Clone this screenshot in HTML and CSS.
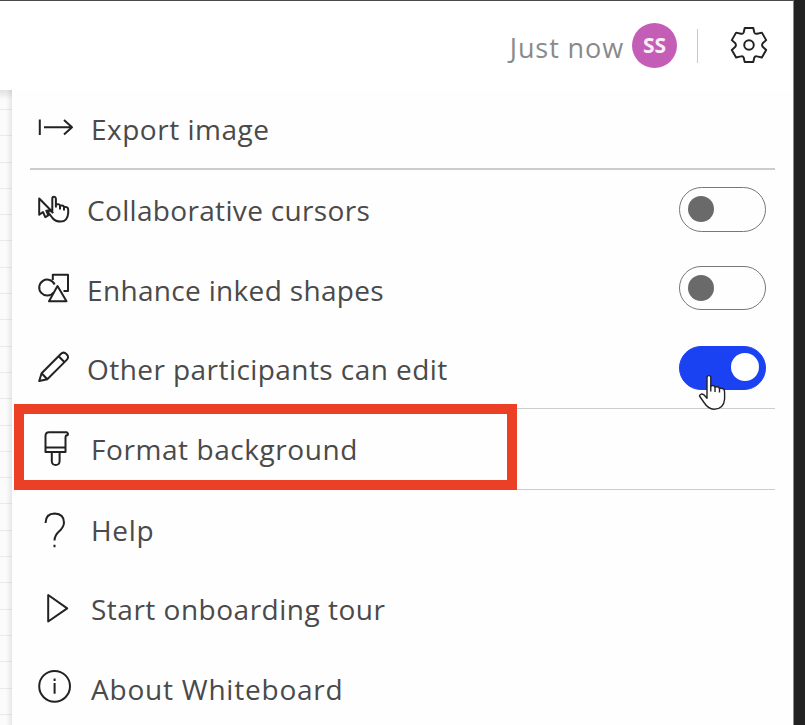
FILE: index.html
```html
<!DOCTYPE html>
<html lang="en">
<head>
<meta charset="utf-8">
<title>Whiteboard settings</title>
<link rel="stylesheet" href="styles.css">
</head>
<body>
<div class="app">
  <header class="topbar">
    <span class="saved">Just now</span>
    <span class="avatar">SS</span>
    <span class="divider"></span>
    <svg class="gear" width="42" height="42" viewBox="-21.5 -20.5 43 43">
      <path d="M-4.4-17.4H4.4L5.4-13Q6.2-11 8.3-11.6L13.2-12.7L17.6-5L14-1.8Q12.8 0 14 1.8L17.6 5L13.2 12.7L8.3 11.6Q6.2 11 5.4 13L4.4 17.4H-4.4L-5.4 13Q-6.2 11-8.3 11.6L-13.2 12.7L-17.6 5L-14 1.8Q-12.8 0-14-1.8L-17.6-5L-13.2-12.7L-8.3-11.6Q-6.2-11-5.4-13Z"/>
      <circle r="4.9"/>
    </svg>
  </header>
  <main class="body">
    <div class="canvas"></div>
    <nav class="menu">
      <div class="item ruled thick">
        <svg class="icon" viewBox="30 90 54 80"><path d="M39.8 119.5V135M44 127.3H71.5M64 120L72 127.3L64 134.6"/></svg>
        <span class="label export">Export image</span>
      </div>
      <div class="item">
        <svg class="icon" viewBox="30 170 54 80"><path d="M39.2 198.5V214.8L43 212L45.3 217.2L48.3 215.4L46.3 210.7L50.8 210.3ZM52.3 211.5V198.5Q52.3 196.8 54 196.8T55.9 198.5V207.5M55.9 204.5Q60 203.6 60 206V209.5M60 205.8Q64 204.8 64 207.5V210.5M64 207.2Q68.2 206.5 68.2 209.5V213Q67.6 221.6 60.5 221.6Q55.5 221.6 52.5 218L47.8 211.8Q50 209 53.2 213.2"/></svg>
        <span class="label toggled collab">Collaborative cursors</span>
        <span class="switch"></span>
      </div>
      <div class="item">
        <svg class="icon" viewBox="30 250 54 80"><path d="M52.8 280V274.8H68V291H63.5M57.5 286L49 301.3H66.5Z"/><path d="M53.5 292.5A8 8 0 1 1 54.6 284.5"/></svg>
        <span class="label toggled enhance">Enhance inked shapes</span>
        <span class="switch short"></span>
      </div>
      <div class="item ruled edit-row">
        <svg class="icon" viewBox="30 330 54 80"><path d="M39.2 381L41.6 373.2L60.8 354Q63.6 351.2 66.6 354.2T66.5 360.1L47.3 379.2ZM58.6 356.2L64.3 362M41.6 373.2L47.3 379.2"/></svg>
        <span class="label toggled other">Other participants can edit</span>
        <span class="switch short on"></span>
        <svg class="pointer" width="30" height="38" viewBox="698 373 30 38"><path d="M707 377.5Q707 375.6 708.9 375.6T710.8 377.5V386Q713.8 384.8 715 387Q718.6 386 719.5 388.4Q724.6 387.6 724.6 392V399Q723.8 409.2 714 409.2Q708.4 409.2 704 402.5L699.5 396Q700.5 392.6 704.3 395.2L707 398.2Z"/><path d="M710.8 385.5V391.5M715 387V392M719.5 388.4V392.5"/></svg>
      </div>
      <div class="item ruled format-row">
        <svg class="icon" viewBox="30 409 54 80"><path d="M45.5 452V436Q45.5 432.2 49 432.2H66.5Q68.8 433.5 67.5 435.3Q65.5 434.5 65.5 438V452ZM45.5 447.5H65.5M51.8 452V461.5Q52.2 465 55.7 465T59.6 461.5V452"/></svg>
        <span class="label format">Format background</span>
        <div class="highlight"></div>
      </div>
      <div class="item">
        <svg class="icon" viewBox="30 490 54 80"><path d="M45.5 523Q45.8 513.5 54.7 513.5Q64 514 64 522.5Q63.8 527 59.5 531Q54.5 535.5 54.5 540.5M54.5 544.7V547.3"/></svg>
        <span class="label help">Help</span>
      </div>
      <div class="item">
        <svg class="icon" viewBox="30 570 54 80"><path d="M48.2 595V621.5L67.2 608.4Z"/></svg>
        <span class="label start">Start onboarding tour</span>
      </div>
      <div class="item">
        <svg class="icon" viewBox="30 650 54 80"><circle cx="54.6" cy="686.3" r="15.4"/><path d="M54.6 683V693.8M54.6 678.4V681"/></svg>
        <span class="label about">About Whiteboard</span>
      </div>
    </nav>
  </main>
</div>
</body>
</html>
```
FILE: styles.css
```css
* { box-sizing: border-box; }
body {
  margin: 0;
  background: #222;
  font-family: "Open Sans", "Noto Sans", sans-serif;
}
.app {
  width: 794px;
  height: 725px;
  overflow: hidden;
  background: #fff;
  border-top: 1px solid #4a4a4a;
  border-right: 1px solid #8a8a8a;
}
.topbar {
  height: 89px;
  display: flex;
  align-items: center;
  justify-content: flex-end;
  padding-right: 23px;
  background: #fff;
}
.saved {
  margin-top: 4px;
  margin-right: 8px;
  font-size: 27px;
  letter-spacing: .9px;
  color: #8a8a8a;
}
.avatar {
  width: 45px;
  height: 45px;
  margin-top: -1px;
  border-radius: 50%;
  background: #c45db6;
  color: #fbeefa;
  font-size: 21px;
  font-weight: 700;
  line-height: 44px;
  text-align: center;
}
.divider {
  width: 1px;
  height: 34px;
  margin: 0 30px 0 20px;
  background: #c8c8c8;
}
.gear, .icon {
  flex: none;
  fill: none;
  stroke: #222;
  stroke-width: 2;
  stroke-linejoin: round;
}
.body { display: flex; height: 635px; }
.canvas {
  width: 12px;
  background:
    linear-gradient(90deg, transparent 50%, rgba(0,0,0,.08)),
    linear-gradient(rgba(0,0,0,.1), transparent 10px),
    repeating-linear-gradient(transparent 0 19px, #eaeaea 19px 20px, transparent 20px 26.3px),
    #fbfbfb;
}
.menu {
  flex: 1;
  padding: 0 18px;
  background: #fefefe;
}
.item {
  position: relative;
  display: flex;
  align-items: center;
  height: 80px;
}
.edit-row { height: 79px; }
.ruled { border-bottom: 1px solid #ccc; }
.thick { border-bottom-width: 2px; }
.icon { width: 54px; height: 80px; align-self: flex-start; }
.label {
  margin-left: 7px;
  margin-top: -1px;
  font-size: 28px;
  line-height: 40px;
  white-space: nowrap;
  color: #4a4a4a;
}
.toggled { margin-left: 3px; }
.export { letter-spacing: .5px; }
.collab { letter-spacing: .33px; }
.enhance { letter-spacing: .33px; }
.other { letter-spacing: .44px; }
.format { letter-spacing: .57px; }
.help { letter-spacing: .7px; }
.start { letter-spacing: .5px; margin-top: -3px; }
.about { letter-spacing: .78px; margin-top: -3px; }
.switch {
  width: 87px;
  height: 45px;
  margin: 0 9px 2px auto;
  padding: 8px;
  border: 1.5px solid #777;
  border-radius: 23px;
}
.short { height: 44px; margin-bottom: 4px; padding-top: 7.5px; }
.switch::before {
  content: "";
  display: block;
  width: 26px;
  height: 26px;
  border-radius: 50%;
  background: #6a6a6a;
}
.switch.on { margin-bottom: 2px; border-color: #1b42f2; background: #1b42f2; padding: 6px; }
.switch.on::before { width: 28px; height: 28px; margin-left: auto; background: #fff; }
.pointer {
  position: absolute;
  left: 668px;
  top: 43px;
  fill: #fff;
  stroke: #222;
  stroke-width: 1.4;
  stroke-linejoin: round;
}
.format-row { height: 81px; }
.highlight {
  position: absolute;
  left: -16px;
  top: -5px;
  width: 503px;
  height: 86px;
  border: 10px solid #eb4025;
}
```
